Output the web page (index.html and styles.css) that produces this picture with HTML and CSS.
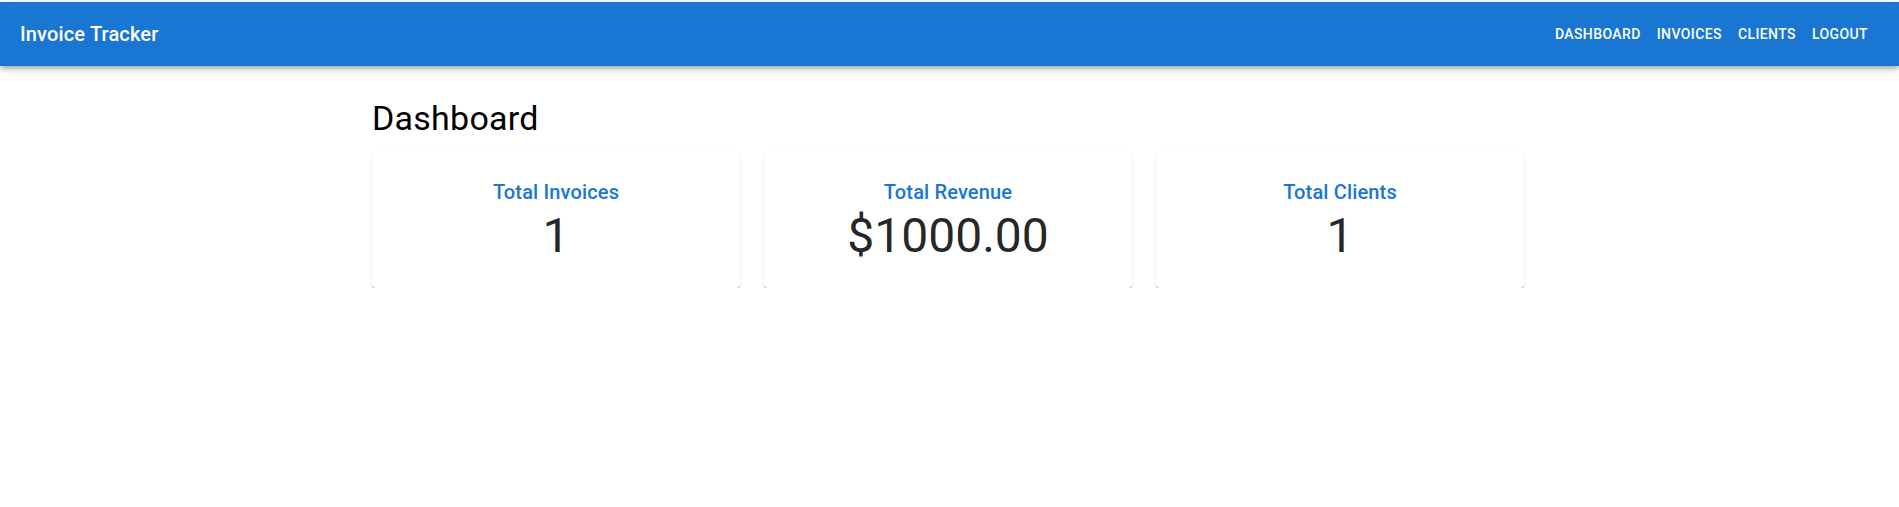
FILE: index.html
```html
<!DOCTYPE html>
<html lang="en">
<head>
<meta charset="utf-8">
<title>Invoice Tracker</title>
<link rel="stylesheet" href="styles.css">
</head>
<body>
<header class="appbar">
  <div class="toolbar">
    <div class="brand">Invoice Tracker</div>
    <nav class="nav">
      <a class="nav-btn" href="#">Dashboard</a>
      <a class="nav-btn" href="#">Invoices</a>
      <a class="nav-btn" href="#">Clients</a>
      <a class="nav-btn" href="#">Logout</a>
    </nav>
  </div>
</header>
<main class="page">
  <div class="container">
    <h1 class="page-title">Dashboard</h1>
    <div class="grid">
      <div class="card">
        <div class="card-label">Total Invoices</div>
        <div class="card-value">1</div>
      </div>
      <div class="card">
        <div class="card-label">Total Revenue</div>
        <div class="card-value">$1000.00</div>
      </div>
      <div class="card">
        <div class="card-label">Total Clients</div>
        <div class="card-value">1</div>
      </div>
    </div>
  </div>
</main>
</body>
</html>
```

FILE: styles.css
```css
* { box-sizing: border-box; }
html, body { margin: 0; padding: 0; }
body {
  padding-top: 2px;
  background: #fff;
  font-family: Roboto, "Noto Sans", "Liberation Sans", sans-serif;
  color: rgba(0, 0, 0, 0.87);
}
.appbar {
  background: #1976d2;
  color: #fff;
  box-shadow: 0px 2px 4px -1px rgba(0,0,0,0.2), 0px 4px 5px 0px rgba(0,0,0,0.14), 0px 1px 10px 0px rgba(0,0,0,0.12);
  position: relative;
  z-index: 2;
}
.toolbar {
  height: 64px;
  display: flex;
  align-items: center;
  padding: 0 23px 0 20px;
}
.brand {
  flex: 1;
  font-size: 20px;
  font-weight: 500;
  line-height: 1.6;
  letter-spacing: 0.0075em;
}
.nav { display: flex; }
.nav-btn {
  color: inherit;
  text-decoration: none;
  text-transform: uppercase;
  font-size: 14px;
  font-weight: 500;
  line-height: 1.75;
  letter-spacing: 0.02857em;
  padding: 6px 8px;
  border-radius: 4px;
}
.page { padding-right: 3px; }
.container {
  max-width: 1152px;
  margin: 0 auto;
  padding-top: 32px;
}
.page-title {
  margin: 0 0 11.9px;
  font-size: 34px;
  font-weight: 400;
  line-height: 1.235;
  letter-spacing: 0.00735em;
  color: #000;
}
.grid {
  display: grid;
  grid-template-columns: repeat(3, 1fr);
  gap: 24px;
}
.card {
  background: #fff;
  border-radius: 4px;
  box-shadow: 0px 2px 1px -1px rgba(0,0,0,0.3), 0px 1px 1px 0px rgba(0,0,0,0.14), 0px 1px 3px 0px rgba(0,0,0,0.12);
  padding: 24px;
  text-align: center;
}
.card-label {
  color: #1976d2;
  font-size: 20px;
  font-weight: 500;
  line-height: 1.6;
  letter-spacing: 0.0075em;
}
.card-value {
  font-size: 48px;
  font-weight: 400;
  line-height: 1.167;
  color: rgba(0, 0, 0, 0.87);
}
```
